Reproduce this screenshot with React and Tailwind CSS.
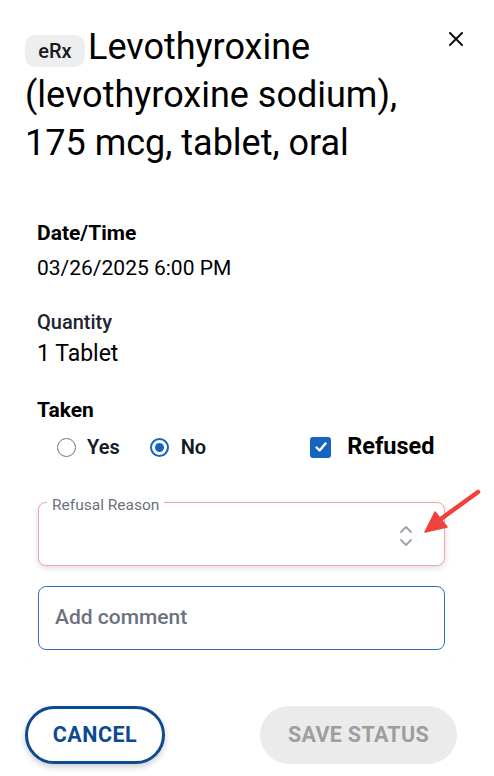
import React from "react";

export default function App() {
  return (
    <div className="relative w-[494px] h-[776px] bg-white font-['Roboto',sans-serif] text-black overflow-hidden">
      <div className="px-[25px]">
        {/* Header */}
        <div className="flex items-start justify-between pt-[23px]">
          <div className="w-[405px] text-[36px] leading-[48px] font-normal text-black">
            <div className="flex items-center">
              <span className="inline-flex items-center justify-center w-[60px] h-[32px] mr-[3px] mt-[8px] rounded-[10px] bg-[#eeeeee] text-[20px] font-medium leading-none text-[#1a1a1a]">
                eRx
              </span>
              <span>Levothyroxine</span>
            </div>
            <div>(levothyroxine sodium),</div>
            <div>175 mcg, tablet, oral</div>
          </div>
          <button className="mt-[8px] mr-[5px] w-[16px] h-[16px] flex items-center justify-center">
            <svg width="14" height="14" viewBox="0 0 14 14">
              <path d="M1 1 L13 13 M13 1 L1 13" stroke="#111" strokeWidth="2" strokeLinecap="square" />
            </svg>
          </button>
        </div>

        {/* Card */}
        <div className="mt-[36px] w-[431px] rounded-[14px] shadow-[0_0_2px_rgba(0,0,0,0.035)] px-[12px] pt-[16px] pb-[18px]">
          <div className="text-[21px] leading-[28px] font-bold">Date/Time</div>
          <div className="mt-[7px] text-[21px] leading-[28px]">03/26/2025 6:00 PM</div>

          <div className="mt-[28px] text-[20px] leading-[24px] font-medium text-[#1e2433]">Quantity</div>
          <div className="mt-[6px] text-[23px] leading-[28px]">1 Tablet</div>

          <div className="mt-[28px] text-[21px] leading-[28px] font-bold">Taken</div>

          <div className="mt-[9px] h-[28px] flex items-center pl-[20px]">
            <span className="w-[19px] h-[19px] rounded-full border-[1.5px] border-[#757575] bg-white" />
            <span className="ml-[11px] text-[20px] font-semibold text-[#141a26]">Yes</span>
            <span className="ml-[30px] w-[19px] h-[19px] rounded-full border-[2px] border-[#1565c0] flex items-center justify-center">
              <span className="w-[9px] h-[9px] rounded-full bg-[#1565c0]" />
            </span>
            <span className="ml-[12px] text-[20px] font-semibold text-[#141a26]">No</span>
            <span className="ml-[104px] w-[21px] h-[21px] rounded-[3px] bg-[#1565c0] flex items-center justify-center">
              <svg width="14" height="14" viewBox="0 0 14 14">
                <path d="M2.5 7.5 L5.6 10.5 L11.5 3.5" stroke="white" strokeWidth="2.4" fill="none" strokeLinecap="round" strokeLinejoin="round" />
              </svg>
            </span>
            <span className="ml-[16px] text-[23.5px] font-bold text-black">Refused</span>
          </div>

          {/* Refusal reason select */}
          <div className="relative mt-[41px] ml-[1px] w-[407px] h-[64px] rounded-[8px] border border-[#f7a3a3] shadow-[0_2px_6px_rgba(0,0,0,0.14)] bg-white">
            <span className="absolute left-[8px] top-[-8px] px-[5px] bg-white text-[15.5px] leading-[20px] text-[#6b7280]">
              Refusal Reason
            </span>
            <svg className="absolute left-[360px] top-[21px]" width="14" height="24" viewBox="0 0 14 24">
              <path d="M2 8 L7 3 L12 8" stroke="#9aa1ab" strokeWidth="1.8" fill="none" strokeLinecap="round" strokeLinejoin="round" />
              <path d="M2 16 L7 21 L12 16" stroke="#9aa1ab" strokeWidth="1.8" fill="none" strokeLinecap="round" strokeLinejoin="round" />
            </svg>
          </div>

          {/* Comment */}
          <div className="mt-[20px] ml-[1px] w-[407px] h-[64px] rounded-[8px] border-[1.5px] border-[#2a6fc9] flex items-center px-[16px]">
            <span className="text-[21px] font-medium text-[#6b7280]">Add comment</span>
          </div>
        </div>

        {/* Buttons */}
        <div className="mt-[38px] flex items-center justify-between w-[432px]">
          <button className="w-[140px] h-[58px] rounded-full border-[3px] border-[#0d4a8f] text-[#0d4a8f] text-[21.5px] font-bold tracking-[0.5px] shadow-[0_3px_6px_rgba(0,0,0,0.2)] bg-white">
            CANCEL
          </button>
          <button className="w-[197px] h-[58px] rounded-full bg-[#ebebeb] text-[#9e9e9e] text-[21.5px] font-bold tracking-[0.3px]">
            SAVE STATUS
          </button>
        </div>
      </div>

      {/* Red annotation arrow */}
      <svg className="absolute left-0 top-0 pointer-events-none" width="494" height="776" viewBox="0 0 494 776">
        <path d="M478 492 L438 521" stroke="#f0413c" strokeWidth="4.5" strokeLinecap="round" />
        <path d="M425 532 L435 512 L447 527 Z" fill="#f0413c" stroke="#f0413c" strokeWidth="1.5" strokeLinejoin="round" />
      </svg>
    </div>
  );
}
